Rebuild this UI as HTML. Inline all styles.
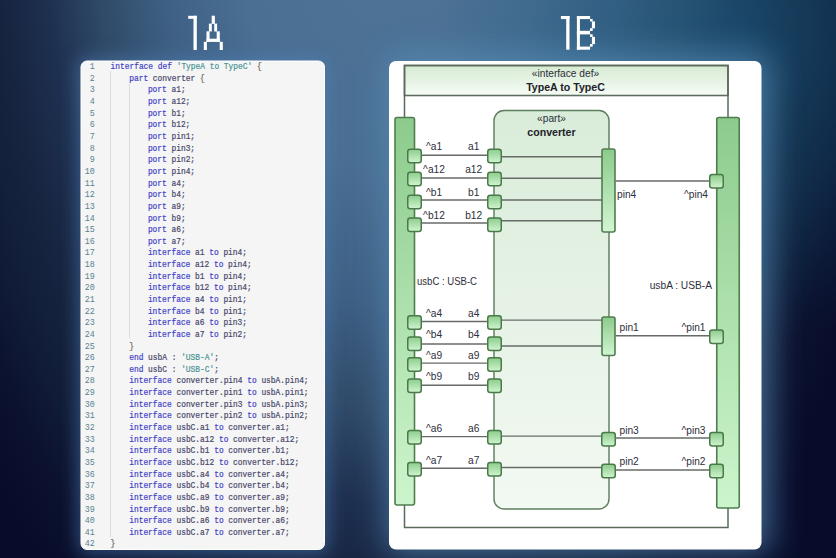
<!DOCTYPE html>
<html><head><meta charset="utf-8"><style>
html,body{margin:0;padding:0;width:836px;height:558px;overflow:hidden;background:#14223f;}
svg{display:block;}
.ln{font-family:"Liberation Mono",monospace;font-size:8.4px;fill:#588390;text-anchor:end;}
.c{font-family:"Liberation Mono",monospace;font-size:8.5px;fill:#48486a;stroke:#48486a;stroke-width:0.2px;}
.k{fill:#4242c8;stroke:#4242c8;}
.s{fill:#4a9494;stroke:#4a9494;}
.b{fill:#6e6552;stroke:#6e6552;}
.hdr{fill:url(#ghdr);stroke:#5e6e5e;stroke-width:1.6;}
.frame{fill:none;stroke:#5a6a5a;stroke-width:1.5;}
.part{fill:url(#gpart);stroke:#5e7e5e;stroke-width:1.45;}
.bar{fill:url(#gbar);stroke:#4f7d4f;stroke-width:1.6;}
.pbar{fill:url(#gpbar);stroke:#4f7d4f;stroke-width:1.6;}
.port{fill:url(#gport);stroke:#4a7a4a;stroke-width:1.5;}
.ln2{stroke:#676b67;stroke-width:1.45;}
.lb{font-family:"Liberation Sans",sans-serif;font-size:10.2px;fill:#2e2e3a;}
.lbb{font-family:"Liberation Sans",sans-serif;font-size:10.6px;font-weight:bold;fill:#222228;}
</style></head><body>
<svg width="836" height="558" viewBox="0 0 836 558">
<defs>
 <radialGradient id="bg" cx="392" cy="-100" r="520" gradientUnits="userSpaceOnUse" gradientTransform="translate(392 -100) scale(1 1.731) translate(-392 100)">
  <stop offset="0" stop-color="#4e7497"/>
  <stop offset="0.3" stop-color="#4a6f93"/>
  <stop offset="0.45" stop-color="#3e6084"/>
  <stop offset="0.57" stop-color="#304a68"/>
  <stop offset="0.67" stop-color="#1e3050"/>
  <stop offset="0.75" stop-color="#172541"/>
  <stop offset="0.84" stop-color="#111d38"/>
  <stop offset="0.92" stop-color="#0b112e"/>
  <stop offset="1" stop-color="#080c2a"/>
 </radialGradient>
 <radialGradient id="cy" cx="740" cy="40" r="300" gradientUnits="userSpaceOnUse">
  <stop offset="0" stop-color="#1a6a90" stop-opacity="0.45"/>
  <stop offset="0.5" stop-color="#14587a" stop-opacity="0.3"/>
  <stop offset="1" stop-color="#0a5070" stop-opacity="0"/>
 </radialGradient>
 <filter id="glow" x="-20%" y="-20%" width="140%" height="140%"><feGaussianBlur stdDeviation="9"/></filter>
 <filter id="glow2" x="-20%" y="-20%" width="140%" height="140%"><feGaussianBlur stdDeviation="16"/></filter>
 <linearGradient id="ghdr" x1="0" y1="0" x2="0" y2="1">
  <stop offset="0" stop-color="#d6ebd2"/><stop offset="1" stop-color="#f6fbf6"/>
 </linearGradient>
 <linearGradient id="gpart" x1="0" y1="0" x2="0" y2="1">
  <stop offset="0" stop-color="#d9ecd9"/><stop offset="1" stop-color="#f3f9f3"/>
 </linearGradient>
 <linearGradient id="gbar" x1="0" y1="0" x2="0" y2="1">
  <stop offset="0" stop-color="#8dcb8d"/><stop offset="1" stop-color="#cdf5cd"/>
 </linearGradient>
 <linearGradient id="gpbar" x1="0" y1="0" x2="0" y2="1">
  <stop offset="0" stop-color="#8ccb8c"/><stop offset="1" stop-color="#d2f5d2"/>
 </linearGradient>
 <linearGradient id="gport" x1="0" y1="0" x2="0" y2="1">
  <stop offset="0" stop-color="#8ccc8c"/><stop offset="1" stop-color="#d0f4d0"/>
 </linearGradient>
</defs>
<rect x="0" y="0" width="836" height="558" fill="url(#bg)"/>
<rect x="0" y="0" width="836" height="558" fill="url(#cy)"/>
<rect x="78" y="58" width="250" height="496" rx="8" fill="#5080b8" opacity="0.55" filter="url(#glow)"/>
<rect x="388" y="55" width="382" height="498" rx="8" fill="#5a90bc" opacity="0.7" filter="url(#glow2)"/>

<g fill="#fff">
 <!-- 1A -->
 <rect x="188.2" y="15.8" width="8.6" height="3"/>
 <rect x="193.5" y="15.8" width="3.3" height="34.2"/>
 <rect x="211.7" y="15.7" width="3.2" height="8.2"/>
 <rect x="208.9" y="23.6" width="2.9" height="7.9"/>
 <rect x="214.2" y="23.6" width="2.9" height="7.9"/>
 <rect x="206.5" y="31.3" width="3.1" height="10.7"/>
 <rect x="216.7" y="31.3" width="3.1" height="10.7"/>
 <rect x="206.5" y="38.7" width="13.3" height="3.2"/>
 <rect x="203.8" y="41.8" width="3.1" height="8.2"/>
 <rect x="219.7" y="41.8" width="3.1" height="8.2"/>
 <!-- 1B -->
 <rect x="560.9" y="16" width="8.6" height="3.1"/>
 <rect x="566.2" y="16" width="3.3" height="33.7"/>
 <rect x="576.9" y="16" width="3" height="33.7"/>
 <rect x="576.9" y="16" width="13.2" height="3.1"/>
 <rect x="590" y="19" width="2.7" height="2.5"/>
 <rect x="591.9" y="21.4" width="3.1" height="6.9"/>
 <rect x="590" y="28.2" width="2.7" height="2.7"/>
 <rect x="576.9" y="30.8" width="13.2" height="3.6"/>
 <rect x="590" y="34.3" width="2.7" height="2.6"/>
 <rect x="591.9" y="36.8" width="3.1" height="7.3"/>
 <rect x="590" y="44" width="2.7" height="2.7"/>
 <rect x="576.9" y="46.6" width="13.2" height="3.1"/>
</g>

<!-- code panel -->
<rect x="81" y="61" width="243.5" height="488.5" rx="6" fill="#f5f5f5" stroke="#ffffff" stroke-width="1"/>
<line x1="110.5" y1="71" x2="110.5" y2="537" stroke="#dedede" stroke-width="1"/>
<line x1="129.5" y1="82.5" x2="129.5" y2="338.5" stroke="#dedede" stroke-width="1"/>
<text class="ln" x="94.8" y="69.20">1</text>
<text class="c" x="110.60" y="69.20" textLength="151.04" lengthAdjust="spacingAndGlyphs"><tspan class="k">interface</tspan> <tspan class="k">def</tspan> <tspan class="s">&#x27;TypeA to TypeC&#x27;</tspan> <tspan class="b">{</tspan></text>
<text class="ln" x="94.8" y="80.84">2</text>
<text class="c" x="129.24" y="80.84" textLength="75.52" lengthAdjust="spacingAndGlyphs"><tspan class="k">part</tspan> converter <tspan class="b">{</tspan></text>
<text class="ln" x="94.8" y="92.48">3</text>
<text class="c" x="147.88" y="92.48" textLength="37.76" lengthAdjust="spacingAndGlyphs"><tspan class="k">port</tspan> a1;</text>
<text class="ln" x="94.8" y="104.12">4</text>
<text class="c" x="147.88" y="104.12" textLength="42.48" lengthAdjust="spacingAndGlyphs"><tspan class="k">port</tspan> a12;</text>
<text class="ln" x="94.8" y="115.76">5</text>
<text class="c" x="147.88" y="115.76" textLength="37.76" lengthAdjust="spacingAndGlyphs"><tspan class="k">port</tspan> b1;</text>
<text class="ln" x="94.8" y="127.40">6</text>
<text class="c" x="147.88" y="127.40" textLength="42.48" lengthAdjust="spacingAndGlyphs"><tspan class="k">port</tspan> b12;</text>
<text class="ln" x="94.8" y="139.04">7</text>
<text class="c" x="147.88" y="139.04" textLength="47.20" lengthAdjust="spacingAndGlyphs"><tspan class="k">port</tspan> pin1;</text>
<text class="ln" x="94.8" y="150.68">8</text>
<text class="c" x="147.88" y="150.68" textLength="47.20" lengthAdjust="spacingAndGlyphs"><tspan class="k">port</tspan> pin3;</text>
<text class="ln" x="94.8" y="162.32">9</text>
<text class="c" x="147.88" y="162.32" textLength="47.20" lengthAdjust="spacingAndGlyphs"><tspan class="k">port</tspan> pin2;</text>
<text class="ln" x="94.8" y="173.96">10</text>
<text class="c" x="147.88" y="173.96" textLength="47.20" lengthAdjust="spacingAndGlyphs"><tspan class="k">port</tspan> pin4;</text>
<text class="ln" x="94.8" y="185.60">11</text>
<text class="c" x="147.88" y="185.60" textLength="37.76" lengthAdjust="spacingAndGlyphs"><tspan class="k">port</tspan> a4;</text>
<text class="ln" x="94.8" y="197.24">12</text>
<text class="c" x="147.88" y="197.24" textLength="37.76" lengthAdjust="spacingAndGlyphs"><tspan class="k">port</tspan> b4;</text>
<text class="ln" x="94.8" y="208.88">13</text>
<text class="c" x="147.88" y="208.88" textLength="37.76" lengthAdjust="spacingAndGlyphs"><tspan class="k">port</tspan> a9;</text>
<text class="ln" x="94.8" y="220.52">14</text>
<text class="c" x="147.88" y="220.52" textLength="37.76" lengthAdjust="spacingAndGlyphs"><tspan class="k">port</tspan> b9;</text>
<text class="ln" x="94.8" y="232.16">15</text>
<text class="c" x="147.88" y="232.16" textLength="37.76" lengthAdjust="spacingAndGlyphs"><tspan class="k">port</tspan> a6;</text>
<text class="ln" x="94.8" y="243.80">16</text>
<text class="c" x="147.88" y="243.80" textLength="37.76" lengthAdjust="spacingAndGlyphs"><tspan class="k">port</tspan> a7;</text>
<text class="ln" x="94.8" y="255.44">17</text>
<text class="c" x="147.88" y="255.44" textLength="99.12" lengthAdjust="spacingAndGlyphs"><tspan class="k">interface</tspan> a1 <tspan class="k">to</tspan> pin4;</text>
<text class="ln" x="94.8" y="267.08">18</text>
<text class="c" x="147.88" y="267.08" textLength="103.84" lengthAdjust="spacingAndGlyphs"><tspan class="k">interface</tspan> a12 <tspan class="k">to</tspan> pin4;</text>
<text class="ln" x="94.8" y="278.72">19</text>
<text class="c" x="147.88" y="278.72" textLength="99.12" lengthAdjust="spacingAndGlyphs"><tspan class="k">interface</tspan> b1 <tspan class="k">to</tspan> pin4;</text>
<text class="ln" x="94.8" y="290.36">20</text>
<text class="c" x="147.88" y="290.36" textLength="103.84" lengthAdjust="spacingAndGlyphs"><tspan class="k">interface</tspan> b12 <tspan class="k">to</tspan> pin4;</text>
<text class="ln" x="94.8" y="302.00">21</text>
<text class="c" x="147.88" y="302.00" textLength="99.12" lengthAdjust="spacingAndGlyphs"><tspan class="k">interface</tspan> a4 <tspan class="k">to</tspan> pin1;</text>
<text class="ln" x="94.8" y="313.64">22</text>
<text class="c" x="147.88" y="313.64" textLength="99.12" lengthAdjust="spacingAndGlyphs"><tspan class="k">interface</tspan> b4 <tspan class="k">to</tspan> pin1;</text>
<text class="ln" x="94.8" y="325.28">23</text>
<text class="c" x="147.88" y="325.28" textLength="99.12" lengthAdjust="spacingAndGlyphs"><tspan class="k">interface</tspan> a6 <tspan class="k">to</tspan> pin3;</text>
<text class="ln" x="94.8" y="336.92">24</text>
<text class="c" x="147.88" y="336.92" textLength="99.12" lengthAdjust="spacingAndGlyphs"><tspan class="k">interface</tspan> a7 <tspan class="k">to</tspan> pin2;</text>
<text class="ln" x="94.8" y="348.56">25</text>
<text class="c" x="129.24" y="348.56" textLength="4.72" lengthAdjust="spacingAndGlyphs"><tspan class="b">}</tspan></text>
<text class="ln" x="94.8" y="360.20">26</text>
<text class="c" x="129.24" y="360.20" textLength="89.68" lengthAdjust="spacingAndGlyphs"><tspan class="k">end</tspan> usbA : <tspan class="s">&#x27;USB-A&#x27;</tspan>;</text>
<text class="ln" x="94.8" y="371.84">27</text>
<text class="c" x="129.24" y="371.84" textLength="89.68" lengthAdjust="spacingAndGlyphs"><tspan class="k">end</tspan> usbC : <tspan class="s">&#x27;USB-C&#x27;</tspan>;</text>
<text class="ln" x="94.8" y="383.48">28</text>
<text class="c" x="129.24" y="383.48" textLength="179.36" lengthAdjust="spacingAndGlyphs"><tspan class="k">interface</tspan> converter.pin4 <tspan class="k">to</tspan> usbA.pin4;</text>
<text class="ln" x="94.8" y="395.12">29</text>
<text class="c" x="129.24" y="395.12" textLength="179.36" lengthAdjust="spacingAndGlyphs"><tspan class="k">interface</tspan> converter.pin1 <tspan class="k">to</tspan> usbA.pin1;</text>
<text class="ln" x="94.8" y="406.76">30</text>
<text class="c" x="129.24" y="406.76" textLength="179.36" lengthAdjust="spacingAndGlyphs"><tspan class="k">interface</tspan> converter.pin3 <tspan class="k">to</tspan> usbA.pin3;</text>
<text class="ln" x="94.8" y="418.40">31</text>
<text class="c" x="129.24" y="418.40" textLength="179.36" lengthAdjust="spacingAndGlyphs"><tspan class="k">interface</tspan> converter.pin2 <tspan class="k">to</tspan> usbA.pin2;</text>
<text class="ln" x="94.8" y="430.04">32</text>
<text class="c" x="129.24" y="430.04" textLength="160.48" lengthAdjust="spacingAndGlyphs"><tspan class="k">interface</tspan> usbC.a1 <tspan class="k">to</tspan> converter.a1;</text>
<text class="ln" x="94.8" y="441.68">33</text>
<text class="c" x="129.24" y="441.68" textLength="169.92" lengthAdjust="spacingAndGlyphs"><tspan class="k">interface</tspan> usbC.a12 <tspan class="k">to</tspan> converter.a12;</text>
<text class="ln" x="94.8" y="453.32">34</text>
<text class="c" x="129.24" y="453.32" textLength="160.48" lengthAdjust="spacingAndGlyphs"><tspan class="k">interface</tspan> usbC.b1 <tspan class="k">to</tspan> converter.b1;</text>
<text class="ln" x="94.8" y="464.96">35</text>
<text class="c" x="129.24" y="464.96" textLength="169.92" lengthAdjust="spacingAndGlyphs"><tspan class="k">interface</tspan> usbC.b12 <tspan class="k">to</tspan> converter.b12;</text>
<text class="ln" x="94.8" y="476.60">36</text>
<text class="c" x="129.24" y="476.60" textLength="160.48" lengthAdjust="spacingAndGlyphs"><tspan class="k">interface</tspan> usbC.a4 <tspan class="k">to</tspan> converter.a4;</text>
<text class="ln" x="94.8" y="488.24">37</text>
<text class="c" x="129.24" y="488.24" textLength="160.48" lengthAdjust="spacingAndGlyphs"><tspan class="k">interface</tspan> usbC.b4 <tspan class="k">to</tspan> converter.b4;</text>
<text class="ln" x="94.8" y="499.88">38</text>
<text class="c" x="129.24" y="499.88" textLength="160.48" lengthAdjust="spacingAndGlyphs"><tspan class="k">interface</tspan> usbC.a9 <tspan class="k">to</tspan> converter.a9;</text>
<text class="ln" x="94.8" y="511.52">39</text>
<text class="c" x="129.24" y="511.52" textLength="160.48" lengthAdjust="spacingAndGlyphs"><tspan class="k">interface</tspan> usbC.b9 <tspan class="k">to</tspan> converter.b9;</text>
<text class="ln" x="94.8" y="523.16">40</text>
<text class="c" x="129.24" y="523.16" textLength="160.48" lengthAdjust="spacingAndGlyphs"><tspan class="k">interface</tspan> usbC.a6 <tspan class="k">to</tspan> converter.a6;</text>
<text class="ln" x="94.8" y="534.80">41</text>
<text class="c" x="129.24" y="534.80" textLength="160.48" lengthAdjust="spacingAndGlyphs"><tspan class="k">interface</tspan> usbC.a7 <tspan class="k">to</tspan> converter.a7;</text>
<text class="ln" x="94.8" y="546.44">42</text>
<text class="c" x="110.60" y="546.44" textLength="4.72" lengthAdjust="spacingAndGlyphs"><tspan class="b">}</tspan></text>
<!-- diagram panel -->
<rect x="389" y="61" width="372.5" height="488.5" rx="7" fill="#ffffff"/>
<rect class="hdr" x="404.5" y="65.5" width="323.5" height="30"/>
<rect class="frame" x="404.5" y="65.5" width="323.5" height="462"/>
<text class="lb" x="565.5" y="76.8" text-anchor="middle">«interface def»</text>
<text class="lbb" x="565.5" y="90.8" text-anchor="middle">TypeA to TypeC</text>
<rect class="part" x="494" y="110.5" width="115" height="398.5" rx="10"/>
<text class="lb" x="551.5" y="121.8" text-anchor="middle">«part»</text>
<text class="lbb" x="551.5" y="135.5" text-anchor="middle">converter</text>
<rect class="bar" x="395" y="117.5" width="19.5" height="387.5" rx="2"/>
<rect class="bar" x="716.75" y="117.5" width="22.5" height="390.5" rx="2"/>
<rect class="pbar" x="602" y="149" width="13" height="83" rx="2"/>
<rect class="pbar" x="602" y="317" width="13" height="38.5" rx="2"/>
<line class="ln2" x1="421.5" y1="155.3" x2="487" y2="155.3"/>
<line class="ln2" x1="502" y1="156.7" x2="602" y2="156.7"/>
<line class="ln2" x1="421.5" y1="177.9" x2="487" y2="177.9"/>
<line class="ln2" x1="502" y1="178.2" x2="602" y2="178.2"/>
<line class="ln2" x1="421.5" y1="200.0" x2="487" y2="200.0"/>
<line class="ln2" x1="502" y1="200.0" x2="602" y2="200.0"/>
<line class="ln2" x1="421.5" y1="223.0" x2="487" y2="223.0"/>
<line class="ln2" x1="502" y1="220.7" x2="602" y2="220.7"/>
<line class="ln2" x1="421.5" y1="321.5" x2="487" y2="321.5"/>
<line class="ln2" x1="502" y1="320.1" x2="602" y2="320.1"/>
<line class="ln2" x1="421.5" y1="343.9" x2="487" y2="343.9"/>
<line class="ln2" x1="502" y1="345.9" x2="602" y2="345.9"/>
<line class="ln2" x1="421.5" y1="363.1" x2="487" y2="363.1"/>
<line class="ln2" x1="421.5" y1="385.2" x2="487" y2="385.2"/>
<line class="ln2" x1="421.5" y1="436.6" x2="487" y2="436.6"/>
<line class="ln2" x1="421.5" y1="468.3" x2="487" y2="468.3"/>
<line class="ln2" x1="502" y1="436.1" x2="601.5" y2="436.1"/>
<line class="ln2" x1="502" y1="467.5" x2="601.5" y2="467.5"/>
<line class="ln2" x1="615.5" y1="180.9" x2="709.5" y2="180.9"/>
<line class="ln2" x1="615.5" y1="335.8" x2="709.5" y2="335.8"/>
<line class="ln2" x1="615.5" y1="438" x2="709.5" y2="438"/>
<line class="ln2" x1="615.5" y1="469.9" x2="709.5" y2="469.9"/>
<rect class="port" x="407.75" y="149.15" width="13.5" height="13.5" rx="2.5"/>
<rect class="port" x="487.75" y="149.15" width="13.5" height="13.5" rx="2.5"/>
<text class="lb" x="434" y="150.20000000000002" text-anchor="middle">^a1</text>
<text class="lb" x="473.7" y="150.20000000000002" text-anchor="middle">a1</text>
<rect class="port" x="407.75" y="172.15" width="13.5" height="13.5" rx="2.5"/>
<rect class="port" x="487.75" y="172.15" width="13.5" height="13.5" rx="2.5"/>
<text class="lb" x="434" y="173.20000000000002" text-anchor="middle">^a12</text>
<text class="lb" x="473.7" y="173.20000000000002" text-anchor="middle">a12</text>
<rect class="port" x="407.75" y="195.15" width="13.5" height="13.5" rx="2.5"/>
<rect class="port" x="487.75" y="195.15" width="13.5" height="13.5" rx="2.5"/>
<text class="lb" x="434" y="196.20000000000002" text-anchor="middle">^b1</text>
<text class="lb" x="473.7" y="196.20000000000002" text-anchor="middle">b1</text>
<rect class="port" x="407.75" y="217.95" width="13.5" height="13.5" rx="2.5"/>
<rect class="port" x="487.75" y="217.95" width="13.5" height="13.5" rx="2.5"/>
<text class="lb" x="434" y="219.0" text-anchor="middle">^b12</text>
<text class="lb" x="473.7" y="219.0" text-anchor="middle">b12</text>
<rect class="port" x="407.75" y="315.75" width="13.5" height="13.5" rx="2.5"/>
<rect class="port" x="487.75" y="315.75" width="13.5" height="13.5" rx="2.5"/>
<text class="lb" x="434" y="316.8" text-anchor="middle">^a4</text>
<text class="lb" x="473.7" y="316.8" text-anchor="middle">a4</text>
<rect class="port" x="407.75" y="336.95" width="13.5" height="13.5" rx="2.5"/>
<rect class="port" x="487.75" y="336.95" width="13.5" height="13.5" rx="2.5"/>
<text class="lb" x="434" y="338.0" text-anchor="middle">^b4</text>
<text class="lb" x="473.7" y="338.0" text-anchor="middle">b4</text>
<rect class="port" x="407.75" y="357.75" width="13.5" height="13.5" rx="2.5"/>
<rect class="port" x="487.75" y="357.75" width="13.5" height="13.5" rx="2.5"/>
<text class="lb" x="434" y="358.8" text-anchor="middle">^a9</text>
<text class="lb" x="473.7" y="358.8" text-anchor="middle">a9</text>
<rect class="port" x="407.75" y="378.95" width="13.5" height="13.5" rx="2.5"/>
<rect class="port" x="487.75" y="378.95" width="13.5" height="13.5" rx="2.5"/>
<text class="lb" x="434" y="380.0" text-anchor="middle">^b9</text>
<text class="lb" x="473.7" y="380.0" text-anchor="middle">b9</text>
<rect class="port" x="407.75" y="430.55" width="13.5" height="13.5" rx="2.5"/>
<rect class="port" x="487.75" y="430.55" width="13.5" height="13.5" rx="2.5"/>
<text class="lb" x="434" y="431.6" text-anchor="middle">^a6</text>
<text class="lb" x="473.7" y="431.6" text-anchor="middle">a6</text>
<rect class="port" x="407.75" y="462.45" width="13.5" height="13.5" rx="2.5"/>
<rect class="port" x="487.75" y="462.45" width="13.5" height="13.5" rx="2.5"/>
<text class="lb" x="434" y="463.5" text-anchor="middle">^a7</text>
<text class="lb" x="473.7" y="463.5" text-anchor="middle">a7</text>
<rect class="port" x="601.75" y="432.45" width="13.5" height="13.5" rx="2.5"/>
<rect class="port" x="601.75" y="464.25" width="13.5" height="13.5" rx="2.5"/>
<rect class="port" x="709.75" y="174.55" width="13.5" height="13.5" rx="2.5"/>
<rect class="port" x="709.75" y="329.95" width="13.5" height="13.5" rx="2.5"/>
<rect class="port" x="709.75" y="432.45" width="13.5" height="13.5" rx="2.5"/>
<rect class="port" x="709.75" y="464.25" width="13.5" height="13.5" rx="2.5"/>
<text class="lb" x="617" y="197.7" text-anchor="start">pin4</text>
<text class="lb" x="708" y="197.7" text-anchor="end">^pin4</text>
<text class="lb" x="619.5" y="331" text-anchor="start">pin1</text>
<text class="lb" x="705.5" y="331" text-anchor="end">^pin1</text>
<text class="lb" x="619.5" y="433.8" text-anchor="start">pin3</text>
<text class="lb" x="705.5" y="433.8" text-anchor="end">^pin3</text>
<text class="lb" x="619.5" y="465.2" text-anchor="start">pin2</text>
<text class="lb" x="705.5" y="465.2" text-anchor="end">^pin2</text>
<text class="lb" x="417" y="284.5" textLength="60" lengthAdjust="spacingAndGlyphs">usbC : USB-C</text>
<text class="lb" x="712" y="288.9" text-anchor="end">usbA : USB-A</text>
</svg>
</body></html>
